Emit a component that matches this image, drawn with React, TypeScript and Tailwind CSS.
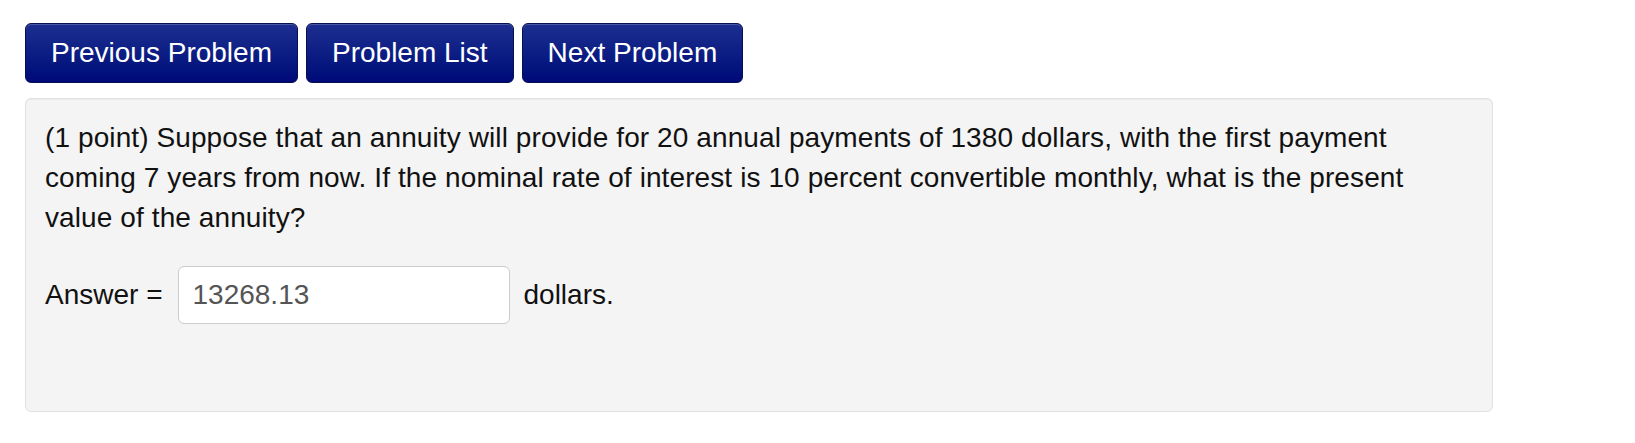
import React from 'react';

const navButtons = ['Previous Problem', 'Problem List', 'Next Problem'];

const NavButton: React.FC<{ label: string }> = ({ label }) => (
    <button className="h-[60px] px-[25px] rounded-[6px] border border-[#06104f] bg-gradient-to-b from-[#1d2e90] to-[#000878] text-white text-[28px] leading-none shadow-[inset_0_1px_0_rgba(255,255,255,0.2)]">
        {label}
    </button>
);

const App: React.FC = () => {
    return (
        <div className="min-h-screen bg-white pl-[25px] pt-[23px]" style={{ fontFamily: '"Liberation Sans", Arial, sans-serif' }}>
            <div className="flex gap-[8px]">
                {navButtons.map(b => (
                    <NavButton key={b} label={b} />
                ))}
            </div>

            <div className="mt-[15px] w-[1468px] rounded-[6px] border border-[#e1e1e1] bg-[#f4f4f4] px-[19px] pt-[19px] pb-[87px] text-[#111] shadow-[inset_0_1px_1px_rgba(0,0,0,0.04)]">
                <p className="text-[28px] leading-[40px] tracking-[0.1px] whitespace-nowrap">
                    (1 point) Suppose that an annuity will provide for 20 annual payments of 1380 dollars, with the first payment
                    <br />
                    coming 7 years from now. If the nominal rate of interest is 10 percent convertible monthly, what is the present
                    <br />
                    value of the annuity?
                </p>

                <div className="mt-[28px] flex items-center text-[28px]">
                    <span>Answer =</span>
                    <input
                        readOnly
                        value="13268.13"
                        className="ml-[15px] h-[58px] w-[332px] rounded-[6px] border border-[#cccccc] bg-white px-[14px] text-[28px] text-[#555] outline-none"
                    />
                    <span className="ml-[14px]">dollars.</span>
                </div>
            </div>
        </div>
    );
};

export default App;
